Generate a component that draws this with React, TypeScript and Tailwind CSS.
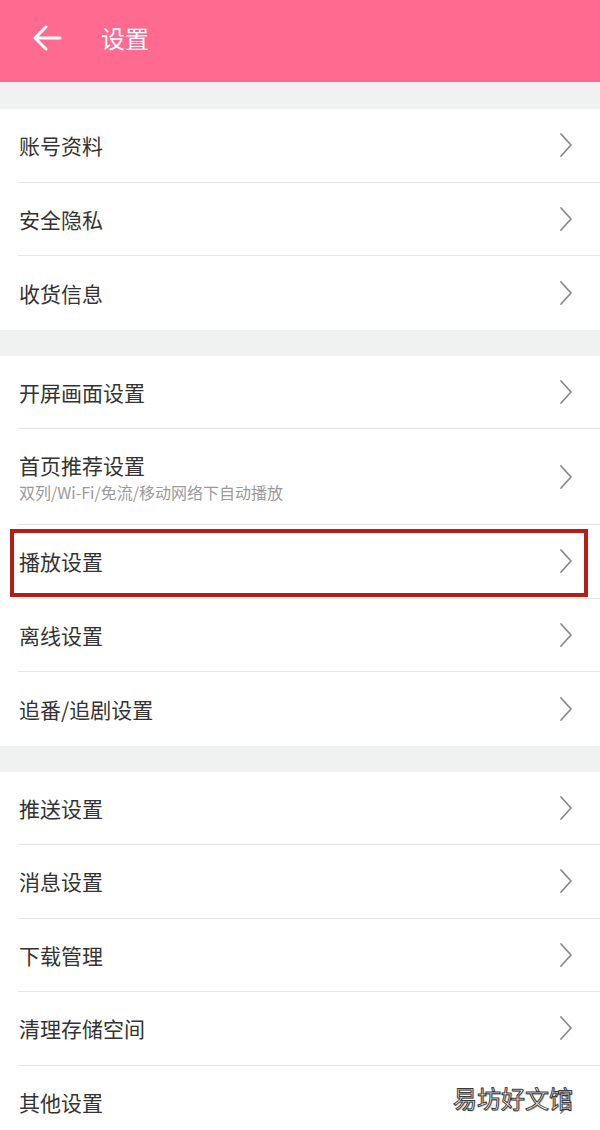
import React from "react";

const FONT = '"Noto Sans CJK SC", "Noto Sans", sans-serif';

function Chevron() {
  return (
    <svg width="14" height="26" viewBox="0 0 14 26" className="shrink-0">
      <path d="M2 2 L12 13 L2 24" fill="none" stroke="#8a8a8a" strokeWidth="1.8" strokeLinecap="round" strokeLinejoin="round" />
    </svg>
  );
}

type Item = { title: string; sub?: string; boxed?: boolean };

function Row({ item, last }: { item: Item; last: boolean }) {
  const tall = !!item.sub;
  return (
    <div className={`relative flex flex-col bg-white ${tall ? "h-[96px]" : "h-[73.5px]"}`}>
      <div className="flex flex-1 items-center justify-between pl-[19px] pr-[27px]">
        <div className="flex flex-col">
          <span className="text-[21px] leading-[28px] text-[#333333]">{item.title}</span>
          {item.sub && <span className="mt-[2px] text-[16px] leading-[22px] text-[#9a9a9a]">{item.sub}</span>}
        </div>
        <Chevron />
      </div>
      {!last && <div className="ml-[18px] h-px shrink-0 bg-[#e6e6e6]" />}
      {item.boxed && (
        <div className="pointer-events-none absolute left-[10px] right-[12px] top-[4px] bottom-[2px] border-[4px] border-[#b81c17]" />
      )}
    </div>
  );
}

function Section({ items }: { items: Item[] }) {
  return (
    <div className="flex flex-col">
      {items.map((it, i) => (
        <Row key={it.title} item={it} last={i === items.length - 1} />
      ))}
    </div>
  );
}

export default function App() {
  const s1: Item[] = [{ title: "账号资料" }, { title: "安全隐私" }, { title: "收货信息" }];
  const s2: Item[] = [
    { title: "开屏画面设置" },
    { title: "首页推荐设置", sub: "双列/Wi-Fi/免流/移动网络下自动播放" },
    { title: "播放设置", boxed: true },
    { title: "离线设置" },
    { title: "追番/追剧设置" },
  ];
  const s3: Item[] = [
    { title: "推送设置" },
    { title: "消息设置" },
    { title: "下载管理" },
    { title: "清理存储空间" },
    { title: "其他设置" },
  ];
  return (
    <div className="relative h-[1130px] w-[600px] overflow-hidden bg-[#f0f1f1]" style={{ fontFamily: FONT }}>
      <header className="flex h-[82px] items-center bg-[#ff6a91] pb-[7px]">
        <div className="ml-[32px] flex h-[28px] w-[30px] items-center">
          <svg width="30" height="28" viewBox="0 0 30 28">
            <path d="M28 14 H4 M14 3 L3 14 L14 25" fill="none" stroke="#ffffff" strokeWidth="3" strokeLinecap="round" strokeLinejoin="round" />
          </svg>
        </div>
        <span className="ml-[39px] text-[24px] leading-[32px] text-white">设置</span>
      </header>
      <div className="h-[27px]" />
      <Section items={s1} />
      <div className="h-[26px]" />
      <Section items={s2} />
      <div className="h-[26px]" />
      <Section items={s3} />
      <div className="absolute left-[453px] top-[1082px] text-[24px] leading-[32px] text-white [-webkit-text-stroke:1px_#3a3a3a] [text-shadow:1px_1px_1px_rgba(0,0,0,0.25)]">
        易坊好文馆
      </div>
    </div>
  );
}
